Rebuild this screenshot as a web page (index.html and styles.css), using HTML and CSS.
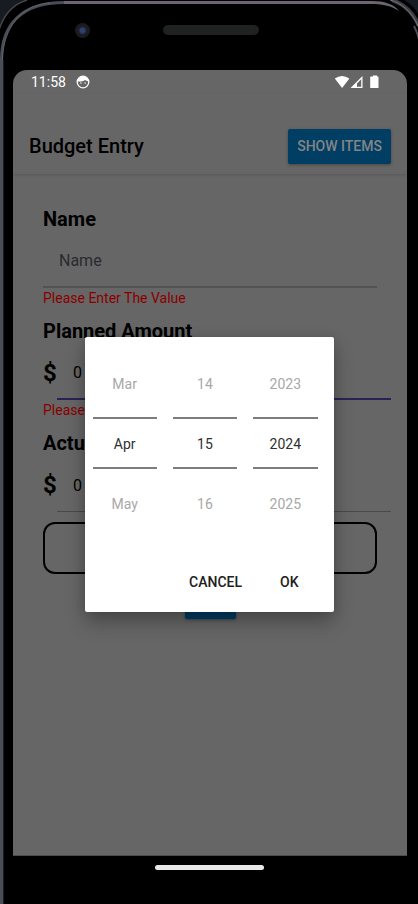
FILE: index.html
```html
<!DOCTYPE html>
<html lang="en">
<head>
<meta charset="utf-8">
<meta name="viewport" content="width=device-width, initial-scale=1">
<title>Budget Entry</title>
<link rel="stylesheet" href="styles.css">
</head>
<body>
<div class="phone">
  <svg class="corner corner-left" width="64" height="120" viewBox="0 0 64 120" aria-hidden="true">
    <path d="M0 0H24C11 5 4 14 0 28Z" fill="#171b22"/>
    <path d="M27 0C13 4 4 14 -1 30" fill="none" stroke="#45474c" stroke-width="1.500"/>
    <path d="M1.500 120V60C1.500 24 22 2.500 64 2.500" fill="none" stroke="#4a4d56" stroke-width="3"/>
    <path d="M3.500 120V60" fill="none" stroke="#1b1d22" stroke-width="1"/>
    <path d="M2.500 60C3 28 22 4 50 3" fill="none" stroke="#70737c" stroke-width="1" opacity=".6"/>
  </svg>
  <svg class="corner corner-right" width="64" height="120" viewBox="0 0 64 120" aria-hidden="true">
    <path d="M50 0H64V14C61 8 56 3 50 0Z" fill="#171b22"/>
    <path d="M38 0C50 4 59 12 65 26" fill="none" stroke="#3c3d42" stroke-width="4"/>
    <path d="M36 0C48 3 58 12 64 26" fill="none" stroke="#77777d" stroke-width="1"/>
    <path d="M0 1H18C30 1 40 4 45 11C37 6 30 4 18 4H0Z" fill="#6b6672"/>
    <path d="M60 26C62 30 64 34 65 40" fill="none" stroke="#4a4b50" stroke-width="2"/>
  </svg>
  <div class="bezel">
    <span class="camera"></span>
    <span class="speaker"></span>
  </div>

  <main class="screen">
    <div class="status">
      <span class="clock">11:58</span>
      <svg width="14" height="14" viewBox="0 0 14 14" aria-hidden="true">
        <circle cx="7" cy="7" r="5.800" fill="none" stroke="#fff" stroke-width="1.300"/>
        <path d="M1.500 6.500C2 3 4 1.300 7 1.300S12 3 12.500 6.500C11 6 9.800 5.500 9 5C7.500 6.200 4.500 6.800 1.500 6.500Z" fill="#fff"/>
        <circle cx="4.900" cy="8" r=".7" fill="#fff"/><circle cx="9.100" cy="8" r=".7" fill="#fff"/>
      </svg>
      <svg class="signals" width="46" height="14" viewBox="0 0 46 14" aria-hidden="true">
        <path d="M.8 3.600Q8 -1.800 15.400 3.600L8.100 13Z" fill="#fff"/>
        <path d="M28.500 1V13H16.500Z" fill="#fff"/>
        <path d="M27.200 4.300V11.700H23V8.500Z" fill="#666"/>
        <path d="M37 1.500h2V.5h4v1h1q.5 0 .5.500V12.500q0 .5-.5.500H37q-.8 0-.8-.5V2q0-.5.800-.5Z" fill="#fff"/>
      </svg>
    </div>

    <header class="header">
      <h1>Budget Entry</h1>
      <button type="button" class="button">SHOW ITEMS</button>
    </header>

    <form class="form">
      <label for="name">Name</label>
      <input id="name" class="text" type="text" placeholder="Name">
      <p class="error">Please Enter The Value</p>

      <label for="planned">Planned Amount</label>
      <div class="amount">
        <span class="currency">$</span>
        <input id="planned" class="text focused" type="text" inputmode="decimal" value="0">
      </div>
      <p class="error">Please Enter The Value</p>

      <label for="actual">Actual Amount</label>
      <div class="amount">
        <span class="currency">$</span>
        <input id="actual" class="text thin" type="text" inputmode="decimal" value="0">
      </div>

      <button type="button" class="date"></button>
      <button type="button" class="button submit"></button>
    </form>

    <div class="overlay">
      <section class="dialog" role="dialog">
        <div class="picker">
          <ul><li>Mar</li><li class="current">Apr</li><li>May</li></ul>
          <ul><li>14</li><li class="current">15</li><li>16</li></ul>
          <ul><li>2023</li><li class="current">2024</li><li>2025</li></ul>
        </div>
        <div class="actions">
          <button type="button">CANCEL</button>
          <button type="button">OK</button>
        </div>
      </section>
    </div>
  </main>

  <div class="navigation"><span class="handle"></span></div>
</div>
</body>
</html>
```
FILE: styles.css
```css
* {
  box-sizing: border-box;
}

body {
  margin: 0;
  background: #000;
  font-family: Roboto, "Liberation Sans", sans-serif;
  color: #000;
}

h1, p, ul {
  margin: 0;
  padding: 0;
}

button, input {
  font: inherit;
  color: inherit;
}

/* Device frame */
.phone {
  position: relative;
  display: flex;
  flex-direction: column;
  min-height: 100vh;
  padding: 0 11px 0 13px;
  background:
    linear-gradient(#6b6672, #6b6672) 0 1px / 100% 3px no-repeat,
    linear-gradient(90deg, #4a4d56 3px, #1b1d22 3px, #1b1d22 4px, #000 4px);
  overflow: hidden;
}

.corner {
  position: absolute;
  top: 0;
  background: #000;
}

.corner-left {
  left: 0;
}

.corner-right {
  right: 0;
}

.bezel {
  position: relative;
  display: grid;
  grid-template-columns: 1fr 96px 1fr;
  align-items: center;
  height: 70px;
  padding: 0 0 10px 2px;
}

.camera {
  width: 15px;
  height: 15px;
  margin-left: 60px;
  border-radius: 50%;
  background: radial-gradient(circle, #34406a 0 2px, #1a1e38 4px, #1b1b1d 5px, #1b1b1d 7px);
}

.speaker {
  height: 10px;
  border-radius: 5px;
  background: #1f2221;
}

.screen {
  position: relative;
  flex: 1;
  border-radius: 14px 14px 0 0;
  border-bottom: 1px solid #4c4c4c;
  background: #666;
  overflow: hidden;
}

.status {
  display: flex;
  align-items: center;
  gap: 10px;
  height: 24px;
  padding: 0 27px 0 18px;
  color: #fff;
  font-size: 14px;
}

.signals {
  margin-left: auto;
}

.header {
  display: flex;
  align-items: center;
  justify-content: space-between;
  height: 80px;
  padding: 24px 16px 0;
  box-shadow: 0 1px 2px #595959;
}

.header h1 {
  font-size: 20px;
  font-weight: 500;
}

.button {
  height: 35px;
  padding: 0 9px;
  border: 0;
  border-radius: 2px;
  background: #003e64;
  color: #858585;
  font-size: 14px;
  font-weight: 500;
  box-shadow: 0 1px 3px #444;
}

/* Entry form */
.form {
  display: flex;
  flex-direction: column;
  padding: 33px 30px;
}

label {
  font-size: 20px;
  font-weight: 700;
  line-height: 24px;
}

.error + label {
  margin-top: 11px;
}

.text {
  width: 100%;
  height: 57px;
  padding: 4px 16px 0;
  border: 0;
  border-bottom: 2px solid #525252;
  border-radius: 0;
  outline: 0;
  background: none;
  font-size: 16px;
}

.text::placeholder {
  color: #2a2a2e;
  opacity: 1;
}

.error {
  color: #8a0000;
  font-size: 14px;
  line-height: 20px;
}

.amount {
  display: flex;
  align-items: center;
  margin-right: -14px;
}

.amount .focused {
  border-bottom-color: #2d2154;
}

.amount .thin {
  border-bottom: 1px solid #4a4a4a;
}

.currency {
  width: 14px;
  flex: none;
  padding-top: 2px;
  font-size: 24px;
  font-weight: 700;
}

.date {
  height: 52px;
  margin-top: 10px;
  border: 2px solid #000;
  border-radius: 12px;
  background: none;
}

.submit {
  align-self: center;
  width: 51px;
  margin-top: 10px;
}

/* Date picker */
.overlay {
  position: absolute;
  inset: 0;
  display: flex;
  align-items: center;
  justify-content: center;
  padding: 24px 2px 0 0;
}

.dialog {
  width: 249px;
  border-radius: 2px;
  background: #fff;
  box-shadow: 0 10px 20px rgba(0, 0, 0, .3), 0 0 10px rgba(0, 0, 0, .1);
}

.picker {
  display: grid;
  grid-template-columns: repeat(3, 1fr);
  gap: 16px;
  padding: 17px 16px 0 8px;
}

.picker ul {
  list-style: none;
  font-size: 14px;
  text-align: center;
}

.picker li {
  height: 63px;
  line-height: 60px;
  color: #a8a8a8;
}

.picker .current {
  height: 52px;
  border: solid #7d7d7d;
  border-width: 2px 0;
  line-height: 50px;
  color: #303030;
}

.picker li:last-child {
  line-height: 71px;
}

.actions {
  display: flex;
  justify-content: flex-end;
  gap: 22px;
  padding: 32px 27px 12px;
}

.actions button {
  height: 36px;
  padding: 0 8px;
  border: 0;
  background: none;
  color: #212121;
  font-size: 14px;
  font-weight: 500;
}

/* Gesture bar */
.navigation {
  display: flex;
  justify-content: center;
  height: 48px;
  padding: 9px 2px 0 0;
}

.handle {
  width: 109px;
  height: 5px;
  border-radius: 3px;
  background: #e8e8e8;
}
```
